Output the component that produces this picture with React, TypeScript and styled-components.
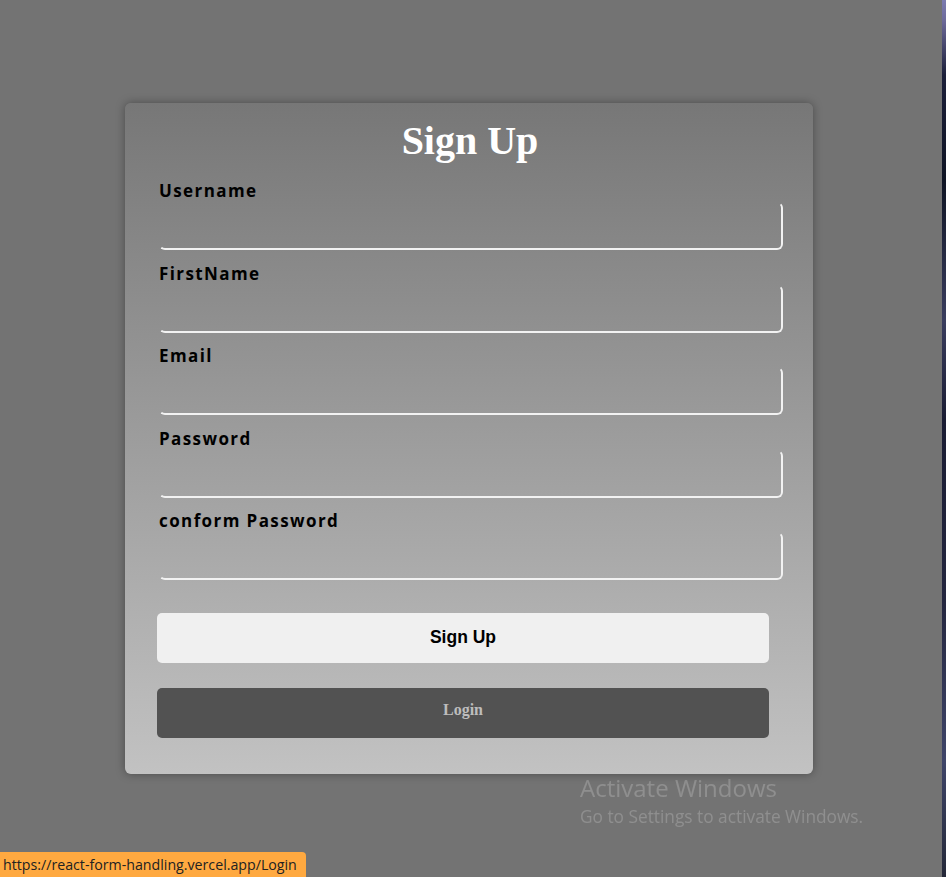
import React from "react";
import styled, { createGlobalStyle } from "styled-components";

const Global = createGlobalStyle`
  html, body { margin: 0; padding: 0; }
  body { background: #737373; overflow: hidden; }
  #root { min-height: 877px; }
`;

const Page = styled.div`
  display: flex;
  min-height: 877px;
`;

const Main = styled.main`
  flex: 1;
  display: flex;
  justify-content: center;
  align-items: flex-start;
  padding: 103px 4px 0 0;
`;

const DesktopStrip = styled.div`
  width: 4px;
  background: linear-gradient(180deg, #7b7bb0 0px, #6d6a9a 20px, #1c1f3a 75px, #0f1424 180px, #3a3d5e 320px, #1a1c33 420px, #24263f 600px, #3f4569 760px, #242838 877px);
`;

const Card = styled.div`
  width: 688px;
  box-sizing: border-box;
  padding: 15px 30px 36px 32px;
  border-radius: 6px;
  background: linear-gradient(180deg, #777777 0%, #c2c2c2 100%);
  box-shadow: 0 0 10px rgba(0, 0, 0, 0.35);
  display: flex;
  flex-direction: column;
`;

const Title = styled.h1`
  margin: 0 0 16px;
  text-align: center;
  font-family: "Liberation Serif", "Times New Roman", serif;
  font-weight: bold;
  font-size: 40px;
  line-height: 46px;
  color: #ffffff;
`;

const Field = styled.div`
  display: flex;
  flex-direction: column;
  padding-left: 2px;
  margin-bottom: 12.5px;
`;

const Label = styled.label`
  font-family: "Open Sans", "Noto Sans", sans-serif;
  font-weight: 700;
  font-size: 17px;
  line-height: 21px;
  letter-spacing: 1.4px;
  color: #000;
  margin-bottom: 1px;
`;

const Input = styled.input`
  box-sizing: border-box;
  width: 624px;
  height: 48px;
  background: transparent;
  border: 2px solid transparent;
  border-bottom-color: #f2f2f2;
  border-right-color: #f2f2f2;
  border-radius: 6px;
  outline: none;
  font-size: 16px;
  padding: 0 10px;
`;

const Button = styled.button<{ $variant: "light" | "dark" }>`
  width: 612px;
  height: 50px;
  margin-top: ${(p) => (p.$variant === "light" ? "20px" : "25px")};
  border: none;
  border-radius: 5px;
  cursor: pointer;
  background: ${(p) => (p.$variant === "light" ? "#f0f0f0" : "#525252")};
  color: ${(p) => (p.$variant === "light" ? "#000" : "#bdbdbd")};
  font-family: ${(p) =>
    p.$variant === "light"
      ? '"Liberation Sans", Arial, sans-serif'
      : '"Liberation Serif", "Times New Roman", serif'};
  font-weight: bold;
  font-size: ${(p) => (p.$variant === "light" ? "17.5px" : "16px")};
  padding: ${(p) => (p.$variant === "light" ? "0" : "0 0 5px")};
`;

const Watermark = styled.div`
  position: fixed;
  left: 580px;
  top: 771px;
  font-family: "Open Sans", "Noto Sans", sans-serif;
  color: rgba(255, 255, 255, 0.2);
  pointer-events: none;
`;

const WatermarkTitle = styled.div`
  font-size: 24px;
  line-height: 34px;
`;

const WatermarkSub = styled.div`
  font-size: 17.3px;
  line-height: 24px;
`;

const StatusBar = styled.div`
  position: fixed;
  left: 0;
  bottom: 0;
  height: 25px;
  padding: 0 9px 0 3px;
  box-sizing: border-box;
  background: #ffa940;
  border-top-right-radius: 4px;
  font-family: "Open Sans", "Noto Sans", sans-serif;
  font-size: 14.2px;
  line-height: 25px;
  color: #222;
  white-space: nowrap;
`;

const fields = ["Username", "FirstName", "Email", "Password", "conform Password"];

export default function App() {
  return (
    <>
      <Global />
      <Page>
        <Main>
          <Card>
            <Title>Sign Up</Title>
            {fields.map((f) => (
              <Field key={f}>
                <Label>{f}</Label>
                <Input type={f.toLowerCase().includes("password") ? "password" : "text"} />
              </Field>
            ))}
            <Button $variant="light">Sign Up</Button>
            <Button $variant="dark">Login</Button>
          </Card>
        </Main>
        <DesktopStrip />
      </Page>
      <Watermark>
        <WatermarkTitle>Activate Windows</WatermarkTitle>
        <WatermarkSub>Go to Settings to activate Windows.</WatermarkSub>
      </Watermark>
      <StatusBar>https://react-form-handling.vercel.app/Login</StatusBar>
    </>
  );
}
